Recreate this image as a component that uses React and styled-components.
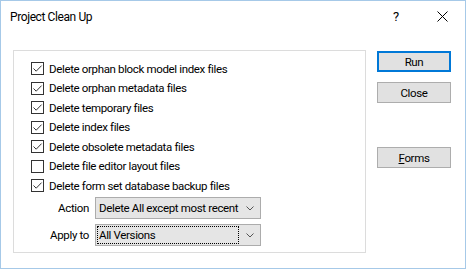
import React from "react";
import styled, { createGlobalStyle } from "styled-components";

const Global = createGlobalStyle`
  html, body { margin: 0; padding: 0; background: #fff; }
  body { font-family: Roboto, "Noto Sans", sans-serif; font-size: 11.5px; color: #000; letter-spacing: -0.35px; }
  * { box-sizing: border-box; }
`;

const Window = styled.div`
  width: 466px;
  height: 269px;
  border: 1px solid #a6c9e8;
  background: #fff;
  display: flex;
  flex-direction: column;
`;

const TitleBar = styled.div`
  height: 31px;
  display: flex;
  align-items: center;
  padding-left: 9px;
`;

const Title = styled.div`
  flex: 1;
  font-size: 12px;
  letter-spacing: -0.4px;
`;

const CaptionButton = styled.div`
  width: 46px;
  height: 30px;
  display: flex;
  align-items: center;
  justify-content: center;
  font-size: 13px;
`;

const Body = styled.div`
  display: flex;
  padding: 18px 0 0 12px;
  gap: 11px;
`;

const Group = styled.div`
  width: 353px;
  height: 203px;
  border: 1px solid #dcdcdc;
  padding: 8px 0 0 17px;
  display: flex;
  flex-direction: column;
`;

const Row = styled.label`
  height: 19.5px;
  display: flex;
  align-items: center;
  gap: 5px;
  white-space: nowrap;
`;

const Box = styled.span`
  width: 13px;
  height: 13px;
  border: 1px solid #333;
  background: #fff;
  display: flex;
  align-items: center;
  justify-content: center;
  flex: none;
`;

const FieldRow = styled.div`
  display: flex;
  align-items: center;
  margin-top: ${(p) => p.$mt}px;
`;

const FieldLabel = styled.div`
  width: 64px;
  text-align: right;
  padding-right: 6px;
  white-space: nowrap;
`;

const Select = styled.div`
  width: 166px;
  height: 22px;
  background: #e5e5e5;
  border: 1px solid #acacac;
  display: flex;
  align-items: center;
  padding: 2px 6px 2px 2px;
`;

const SelectText = styled.div`
  flex: 1;
  height: 100%;
  display: flex;
  align-items: center;
  padding-left: 1px;
  white-space: nowrap;
  outline: ${(p) => (p.$focus ? "1px dotted #000" : "none")};
  margin-right: ${(p) => (p.$focus ? "8px" : "4px")};
`;

const Buttons = styled.div`
  display: flex;
  flex-direction: column;
`;

const Button = styled.div`
  width: 74px;
  height: 21px;
  background: #e1e1e1;
  border: ${(p) => (p.$default ? "2px solid #0078d7" : "1px solid #adadad")};
  display: flex;
  align-items: center;
  justify-content: center;
  margin-top: ${(p) => p.$mt || 0}px;
`;

const Check = () => (
  <svg width="11" height="11" viewBox="0 0 11 11">
    <path d="M1.5 5.5 L4.2 8.2 L9.6 2.6" fill="none" stroke="#333" strokeWidth="1" />
  </svg>
);

const Chevron = () => (
  <svg width="8" height="5" viewBox="0 0 8 5">
    <path d="M0.5 0.5 L4 4 L7.5 0.5" fill="none" stroke="#555" strokeWidth="1" />
  </svg>
);

const items = [
  ["Delete orphan block model index files", true],
  ["Delete orphan metadata files", true],
  ["Delete temporary files", true],
  ["Delete index files", true],
  ["Delete obsolete metadata files", true],
  ["Delete file editor layout files", false],
  ["Delete form set database backup files", true],
];

export default function App() {
  return (
    <>
      <Global />
      <Window>
        <TitleBar>
          <Title>Project Clean Up</Title>
          <CaptionButton>?</CaptionButton>
          <CaptionButton>
            <svg width="11" height="11" viewBox="0 0 11 11">
              <path d="M0.5 0.5 L10.5 10.5 M10.5 0.5 L0.5 10.5" stroke="#000" strokeWidth="1" />
            </svg>
          </CaptionButton>
        </TitleBar>
        <Body>
          <Group>
            {items.map(([t, c]) => (
              <Row key={t}>
                <Box>{c && <Check />}</Box>
                {t}
              </Row>
            ))}
            <FieldRow $mt={1.5}>
              <FieldLabel>Action</FieldLabel>
              <Select>
                <SelectText>Delete All except most recent</SelectText>
                <Chevron />
              </Select>
            </FieldRow>
            <FieldRow $mt={5}>
              <FieldLabel>Apply to</FieldLabel>
              <Select>
                <SelectText $focus>All Versions</SelectText>
                <Chevron />
              </Select>
            </FieldRow>
          </Group>
          <Buttons>
            <Button $default $mt={1}>Run</Button>
            <Button $mt={10}>Close</Button>
            <Button $mt={44}>
              <span>
                <u>F</u>orms
              </span>
            </Button>
          </Buttons>
        </Body>
      </Window>
    </>
  );
}
